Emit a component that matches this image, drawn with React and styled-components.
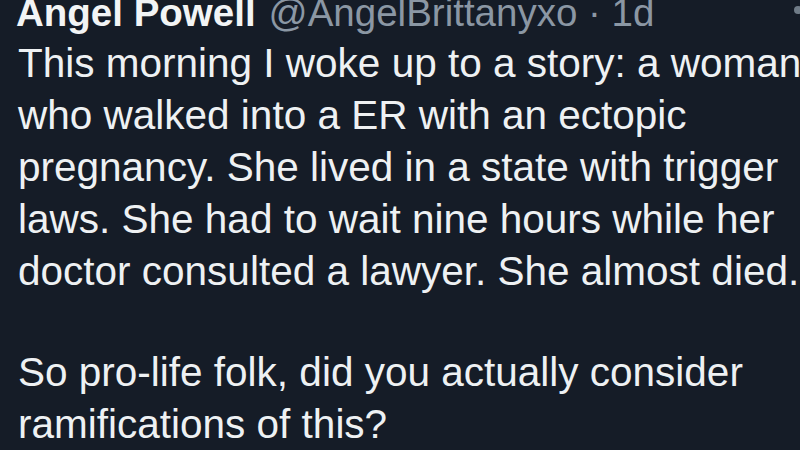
import React from "react";
import styled, { createGlobalStyle } from "styled-components";

const Global = createGlobalStyle`
  html, body { margin: 0; padding: 0; background: #151c27; }
  body { width: 800px; height: 450px; overflow: hidden; }
`;

const Tweet = styled.article`
  position: relative;
  width: 800px;
  height: 450px;
  overflow: hidden;
  background: #151c27;
  padding: 0 0 0 18px;
  box-sizing: border-box;
  font-family: "Liberation Sans", Arial, sans-serif;
  color: #eef1f3;
`;

const Header = styled.div`
  display: flex;
  align-items: baseline;
  gap: 13px;
  white-space: nowrap;
  height: 40px;
  margin-top: -7px;
  margin-left: -2px;
  line-height: 40px;
  font-size: 38.5px;
`;

const Name = styled.span`
  font-weight: 700;
  color: #f2f4f5;
`;

const Handle = styled.span`
  color: #8b97a4;
`;

const MoreDot = styled.span`
  position: absolute;
  top: 6px;
  left: 794px;
  width: 8px;
  height: 8px;
  border-radius: 50%;
  background: #6f7b87;
`;

const Body = styled.div`
  margin-top: 4px;
  font-size: 40.5px;
  line-height: 52px;
  white-space: nowrap;
`;

const Line = styled.div`
  height: ${(p) => (p.$blank ? "49px" : "52px")};
`;

export default function App() {
  const lines = [
    "This morning I woke up to a story: a woman",
    "who walked into a ER with an ectopic",
    "pregnancy. She lived in a state with trigger",
    "laws. She had to wait nine hours while her",
    "doctor consulted a lawyer. She almost died.",
    "",
    "So pro-life folk, did you actually consider",
    "ramifications of this?",
  ];
  return (
    <>
      <Global />
      <Tweet>
        <Header>
          <Name>Angel Powell</Name>
          <Handle>@AngelBrittanyxo · 1d</Handle>
        </Header>
        <MoreDot />
        <Body>
          {lines.map((l, i) => (
            <Line key={i} $blank={l === ""}>
              {l}
            </Line>
          ))}
        </Body>
      </Tweet>
    </>
  );
}
